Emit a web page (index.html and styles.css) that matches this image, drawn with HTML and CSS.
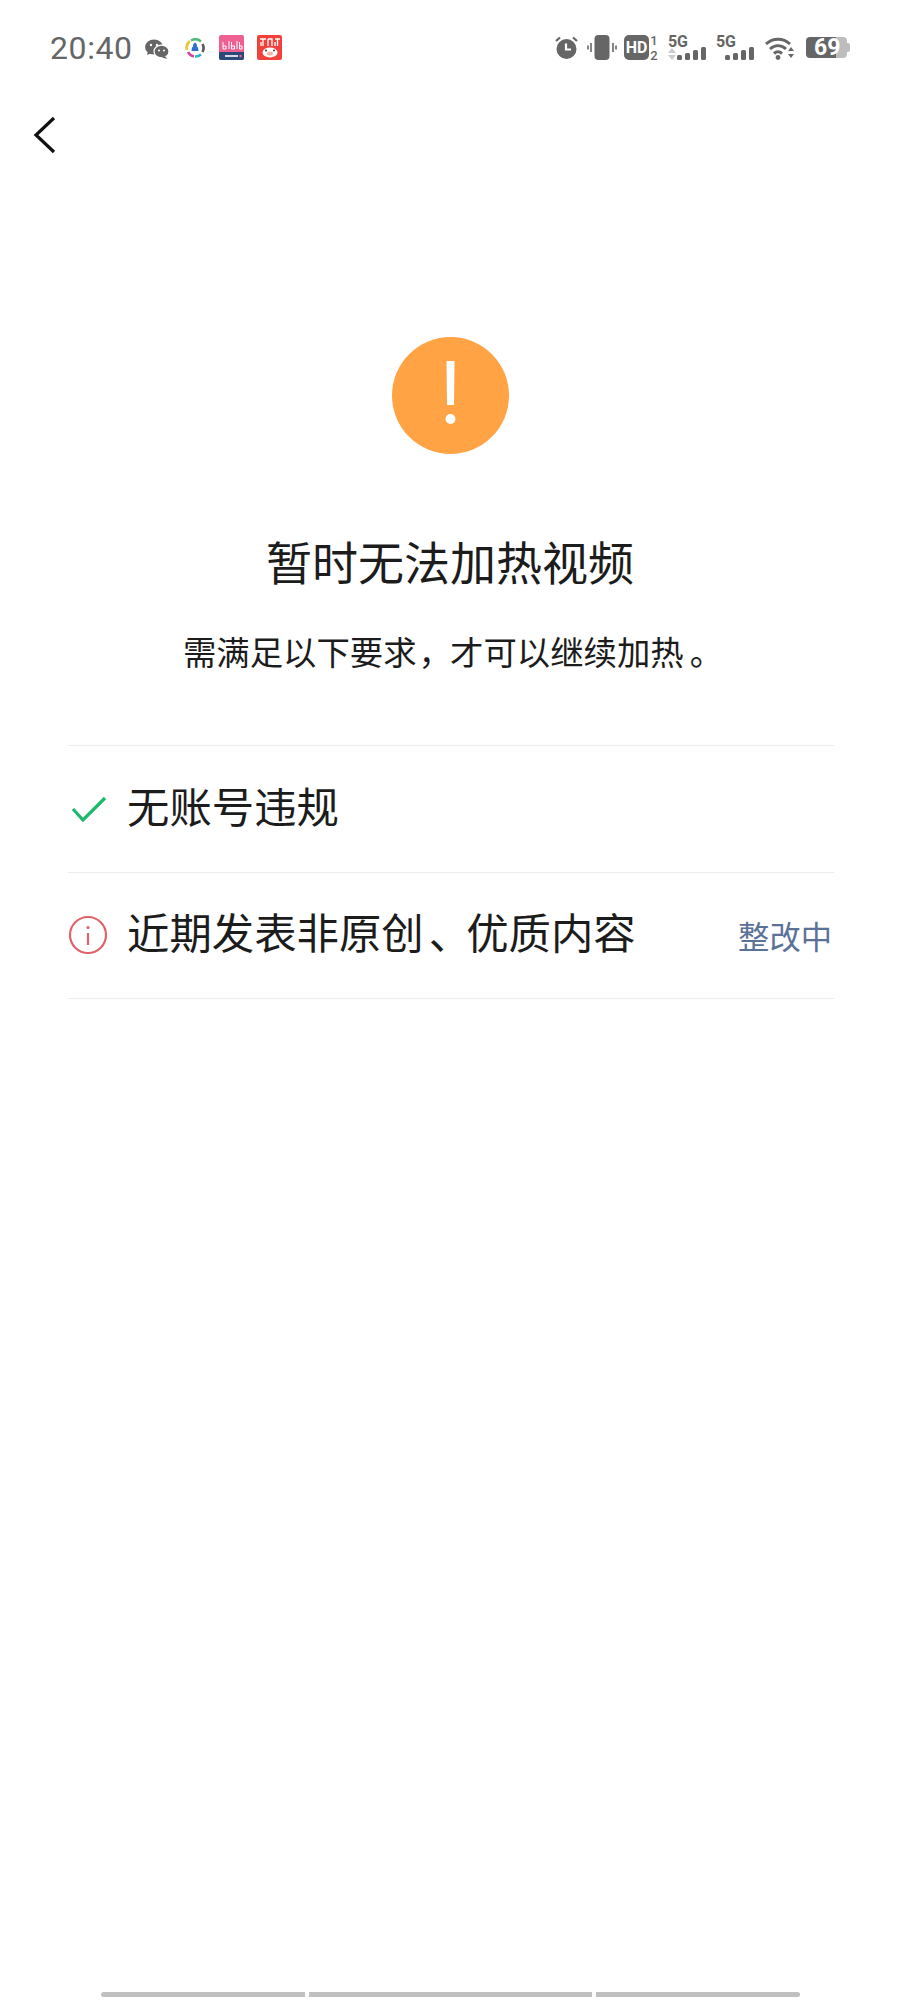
FILE: index.html
```html
<!DOCTYPE html>
<html lang="zh-CN">
<head>
<meta charset="utf-8">
<title>暂时无法加热视频</title>
<link rel="stylesheet" href="styles.css">
</head>
<body>
<div class="page">
  <header class="status">
    <div class="status-left">
      <span class="time">20:40</span>
      <svg class="i-wechat" viewBox="0 0 24 20" width="24" height="20"><ellipse cx="9" cy="8" rx="9" ry="7.600" fill="#666"/><path d="M3 12l-1 4 5-2z" fill="#666"/><ellipse cx="16.500" cy="12.500" rx="7.500" ry="6.300" fill="#666" stroke="#fff" stroke-width="1.200"/><path d="M20 17l2 3-5-1.500z" fill="#666"/><circle cx="6" cy="6" r="1.200" fill="#fff"/><circle cx="12" cy="6" r="1.200" fill="#fff"/><circle cx="14" cy="11.500" r="1" fill="#fff"/><circle cx="19" cy="11.500" r="1" fill="#fff"/></svg>
      <svg class="i-ring" viewBox="0 0 22 22" width="22" height="22"><g fill="none" stroke-width="2.600"><path d="M3 13A8.500 8.500 0 0 1 6 4" stroke="#e8c53a"/><path d="M7 3.500A8.500 8.500 0 0 1 17 4.500" stroke="#55b77d"/><path d="M18.500 7A8.500 8.500 0 0 1 18.500 15" stroke="#57595c"/><path d="M17 17.500A8.500 8.500 0 0 1 11 19.500" stroke="#2bb3c9"/><path d="M10 19.500A8.500 8.500 0 0 1 4 15" stroke="#d9439a"/></g><path d="M11 5.500c2 1 2.200 3 1.800 4 1.200.6 1.600 2 1.600 4.500H7.600c0-2.500.4-3.900 1.600-4.500-.4-1 -.2-3 1.800-4z" fill="#2e6fd0"/></svg>
      <svg class="i-app" viewBox="0 0 25 25" width="25" height="25"><rect width="25" height="25" rx="2" fill="#ee5f92"/><path d="M0 17h25v6a2 2 0 0 1-2 2H2a2 2 0 0 1-2-2z" fill="#2c4a78"/><g stroke="#fff" stroke-width="1" fill="none"><path d="M4 7v7h3v-3H4M10 6v8M12.500 7v7h3v-3h-3M18 6v8M20.500 7v7h2.500v-3h-2.500"/></g><path d="M6 21h13" stroke="#fff" stroke-width="1.600"/><circle cx="21.500" cy="21" r="1.300" fill="#ee5f92"/></svg>
      <svg class="i-app" viewBox="0 0 25 25" width="25" height="25"><rect width="25" height="25" rx="2" fill="#f2413a"/><g stroke="#fff" stroke-width="1.300" fill="none"><path d="M3 4h6M6 4v7M4 7v4M11 4v7M11 4h4v7M18 4h5M20.500 4v7M18 7v4"/></g><ellipse cx="13" cy="17.500" rx="7.500" ry="5" fill="#fff"/><ellipse cx="13" cy="18.500" rx="3" ry="2" fill="#f4b1a8"/><circle cx="9" cy="15.500" r="1" fill="#333"/><circle cx="17" cy="15.500" r="1" fill="#333"/></svg>
    </div>
    <div class="status-right">
      <svg class="i-alarm" viewBox="0 0 23 24" width="23" height="24"><circle cx="11.500" cy="13" r="10" fill="#666"/><path d="M11 7.500v6h5" fill="none" stroke="#fff" stroke-width="2.200"/><path d="M1 5l4-3.500M22 5l-4-3.500" stroke="#666" stroke-width="2.200"/></svg>
      <svg class="i-vib" viewBox="0 0 30 25" width="30" height="25"><rect x="7.500" width="15" height="25" rx="4" fill="#666"/><path d="M4 8v9M1 10.500v4M26 8v9M29 10.500v4" stroke="#666" stroke-width="1.600"/></svg>
      <span class="hd">
        <span class="hd-box">HD</span>
        <span class="hd-nums"><span>1</span><span>2</span></span>
      </span>
      <span class="signal">
        <span class="sig-label">5G</span>
        <svg class="updown" viewBox="0 0 8 12" width="8" height="12"><path d="M4 0l4 5H0zM4 12l4-5H0z" fill="#ccc"/></svg>
        <span class="bars"><i class="b1"></i><i class="b2"></i><i class="b3"></i><i class="b4"></i></span>
      </span>
      <span class="signal">
        <span class="sig-label">5G</span>
        <span class="bars"><i class="b1"></i><i class="b2"></i><i class="b3"></i><i class="b4"></i></span>
      </span>
      <svg class="i-wifi" viewBox="0 0 30 24" width="30" height="24"><g fill="none" stroke="#666" stroke-width="3"><path d="M1 8c7-6.500 17-6.500 24 0"/><path d="M5 13c5-4.500 11-4.500 16 0"/><path d="M9 17.500c2.600-2.200 5.400-2.200 8 0"/></g><circle cx="13" cy="21.500" r="2.400" fill="#666"/><path d="M26 11l3 4h-6zM26 22l3-4h-6z" fill="#666"/></svg>
      <span class="battery"><span class="batt-body"><span class="batt-num">69</span></span><span class="batt-cap"></span></span>
    </div>
  </header>

  <nav class="nav">
    <svg class="back" viewBox="0 0 24 40" width="24" height="40"><path d="M21 2L3 19l18 17" fill="none" stroke="#111" stroke-width="3.200"/></svg>
  </nav>

  <main class="main">
    <svg class="warn" viewBox="0 0 117 117" width="117" height="117"><circle cx="58.500" cy="58.500" r="58.500" fill="#ffa345"/><path d="M54.500 24h8l-.5 44h-7z" fill="#fff"/><circle cx="58.500" cy="82" r="5" fill="#fff"/></svg>
    <h1 class="title">暂时无法加热视频</h1>
    <p class="sub">需满足以下要求<span class="nudge-s">，</span>才可以继续加热<span class="nudge-l">。</span></p>

    <ul class="list">
      <li class="row">
        <svg class="row-icon" viewBox="0 0 40 40" width="40" height="40"><path d="M5 20l10 11L37 9" fill="none" stroke="#1bb96c" stroke-width="3.200"/></svg>
        <span class="row-text">无账号违规</span>
      </li>
      <li class="row">
        <svg class="row-icon" viewBox="0 0 40 40" width="40" height="40"><circle cx="20" cy="20" r="18" fill="none" stroke="#e0646c" stroke-width="2.200"/><path d="M20 18v12" stroke="#e0646c" stroke-width="2.200"/><circle cx="20" cy="12.500" r="1.600" fill="#e0646c"/></svg>
        <span class="row-text">近期发表非原创<span class="nudge-m">、</span>优质内容</span>
        <span class="row-status">整改中</span>
      </li>
    </ul>
  </main>

  <footer class="home">
    <span class="seg seg-a"></span>
    <span class="seg seg-b"></span>
    <span class="seg seg-c"></span>
  </footer>
</div>
</body>
</html>
```
FILE: styles.css
```css
* { box-sizing: border-box; }
html, body { margin: 0; padding: 0; background: #fff; }
body { font-family: "Noto Sans CJK SC", "Noto Sans", sans-serif; color: #1c1c1c; text-spacing-trim: space-all; }
.page { width: 900px; height: 2000px; display: flex; flex-direction: column; }

.status { height: 25px; margin-top: 35px; padding: 0 50px; display: flex; justify-content: space-between; align-items: center; color: #666; font-family: Roboto, "Liberation Sans", sans-serif; }
.status-left { display: flex; align-items: center; }
.time { font-size: 32px; line-height: 36px; letter-spacing: 0.6px; margin-right: 12px; }
.i-wechat { margin-top: 2px; margin-right: 15px; }
.i-ring { margin-right: 13px; margin-top: 1px; }
.status-left .i-app + .i-app { margin-left: 13px; }
.status-right { display: flex; align-items: center; height: 25px; }
.i-alarm { margin-right: 9px; }
.i-vib { margin-right: 7px; }
.hd { display: flex; align-items: center; flex: none; width: 35px; margin-right: 9px; }
.hd-box { flex: none; width: 25px; height: 25px; border-radius: 5px; background: #666; color: #fff; font-size: 16px; line-height: 25px; font-weight: 700; text-align: center; }
.hd-nums { display: flex; flex-direction: column; align-items: center; width: 10px; font-size: 13px; line-height: 15px; font-weight: 500; }
.signal { position: relative; display: block; width: 38px; height: 25px; margin-right: 10px; }
.signal + .signal { margin-right: 11px; }
.sig-label { display: block; font-size: 16px; line-height: 13px; font-weight: 700; letter-spacing: -0.3px; }
.updown { position: absolute; left: 0; bottom: 0; }
.bars { position: absolute; right: 0; bottom: 0; display: flex; align-items: flex-end; gap: 3px; }
.bars i { display: block; width: 5px; background: #666; border-radius: 1.500px; }
.bars .b1 { height: 5px; }
.bars .b2 { height: 7px; }
.bars .b3 { height: 10px; }
.bars .b4 { height: 13px; }
.i-wifi { margin-right: 11px; }
.battery { display: flex; align-items: center; width: 44px; height: 21px; }
.batt-body { display: block; flex: none; width: 41px; height: 21px; padding-left: 8px; border-radius: 4px; background: linear-gradient(to right, #666 30px, #bdbdbd 30px); }
.batt-num { display: block; color: #fff; font-size: 23px; line-height: 21px; font-weight: 700; }
.batt-cap { display: block; width: 3px; height: 9px; border-radius: 0 2px 2px 0; background: #bdbdbd; }

.nav { padding: 56px 0 0 33px; height: 134px; }
.back { display: block; }

.main { display: flex; flex-direction: column; align-items: center; padding-top: 143px; }
.warn { display: block; }
.title { margin: 76px 0 0; font-size: 46px; line-height: 60px; font-weight: 400; }
.sub { margin: 39px 0 0; font-size: 33.400px; line-height: 44px; white-space: nowrap; }
.nudge-s { margin-left: 2px; letter-spacing: -2px; }
.nudge-l { margin-left: 6px; letter-spacing: -6px; }
.nudge-m { margin-left: 5px; letter-spacing: -5px; }
.list { list-style: none; margin: 72px 0 0 2px; padding: 0; width: 766px; border-top: 1px solid #ececec; }
.row { display: flex; align-items: center; height: 126.500px; border-bottom: 1px solid #ececec; }
.row-icon { flex: none; margin-right: 19px; }
.row-text { flex: 1; font-size: 42.400px; line-height: 60px; padding-bottom: 8px; }
.row-status { font-size: 31.300px; line-height: 44px; color: #5b7298; margin-right: 2px; margin-top: 2px; }

.home { margin-top: auto; margin-bottom: 3px; padding-left: 101px; display: flex; gap: 4px; }
.seg { display: block; height: 5px; background: #c0c0c0; }
.seg-a { width: 204px; border-radius: 3px 0 0 3px; }
.seg-b { width: 283px; }
.seg-c { width: 204px; border-radius: 0 3px 3px 0; }
```
